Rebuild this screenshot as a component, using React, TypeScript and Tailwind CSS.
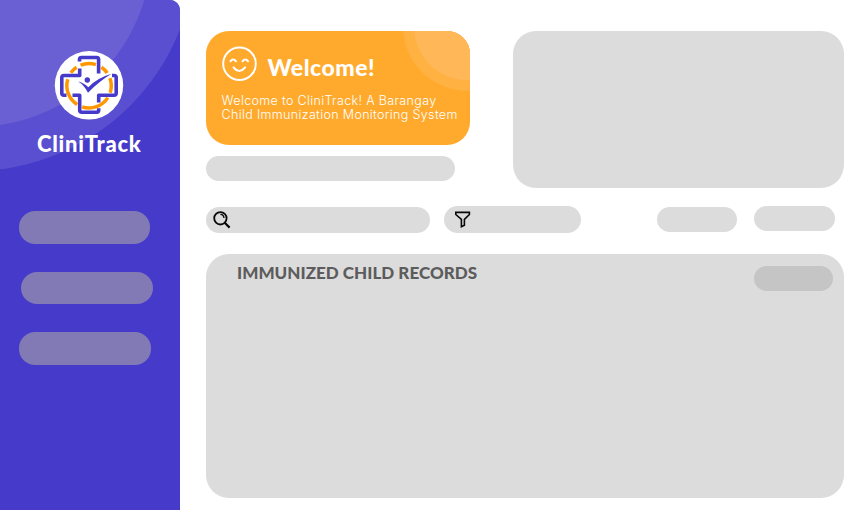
function ClinicLogo() {
  return (
    <svg className="block h-[70px] w-[70px]" viewBox="0 0 70 70" fill="none" aria-hidden="true">
      <circle cx="35" cy="35.3" r="34.2" fill="#fff" />
      <path
        d="M25.5 11.5V9.5Q25.5 7.5 27.5 7.5H42.6Q44.6 7.5 44.6 9.5V23.5M25.7 18.5V25.5H10Q7.8 25.5 7.8 27.5V43Q7.8 45.3 10 45.3H12.5M18.5 45.3H25.7V60Q25.7 62.2 27.7 62.2H42.7Q44.7 62.2 44.7 60V58.2M44.7 52.5V45.3H60Q62.2 45.3 62.2 43V27.5Q62.2 25.5 60 25.5H58"
        stroke="#463aca"
        strokeWidth="3.6"
        strokeLinejoin="round"
      />
      <g stroke="#ff9800" strokeWidth="3.5">
        <path d="M13.8 29.2A22.2 22.2 0 0 0 23.2 54.5" />
        <path d="M16.8 22.8A22.2 22.2 0 0 1 22.6 17.3" />
        <path d="M26.5 15.2A22.2 22.2 0 0 1 41.9 14.6" />
        <path d="M47.4 17.3A22.2 22.2 0 0 1 53.2 23" />
        <path d="M55.9 28.1A22.2 22.2 0 0 1 56.2 42.7" />
        <path d="M53.8 47.6A22.2 22.2 0 0 1 28.1 56.8" />
      </g>
      <path d="M24.5 31.5Q31 33.5 34.5 37.3Q43 28 57.5 23.8Q45 31.5 34 42.5Q30 35 24.5 31.5Z" fill="#fff" stroke="#fff" strokeWidth="2.4" />
      <path d="M24.2 31.5Q31 33.5 34.3 37.3Q43 28 57.5 23.8Q45 31.5 34 42.7Q30 35 24.2 31.5Z" fill="#463aca" />
      <circle cx="33.3" cy="30" r="2.7" fill="#463aca" />
    </svg>
  );
}

function SmileIcon() {
  return (
    <svg className="block h-[36px] w-[36px]" viewBox="0 0 36 36" fill="none" stroke="#fff" strokeWidth="2" strokeLinecap="round" aria-hidden="true">
      <circle cx="17.5" cy="17.8" r="16.3" />
      <path d="M8.4 15.3q2.8-3.7 5.6 0M20.5 15.3q2.8-3.7 5.6 0M11.5 21.4q5.8 7 11.6 0" />
    </svg>
  );
}

function SearchIcon() {
  return (
    <svg className="block h-[18px] w-[18px]" viewBox="0 0 18 18" fill="none" stroke="#080808" strokeWidth="1.8" aria-hidden="true">
      <circle cx="7.4" cy="7.3" r="6.2" />
      <path d="M11.5 11.5L16.6 16.6" strokeWidth="2.2" />
      <path d="M7.4 3.4Q10.6 3.5 11 7" strokeWidth="1.4" />
    </svg>
  );
}

function FilterIcon() {
  return (
    <svg className="block h-[17px] w-[16px]" viewBox="0 0 16 17" fill="none" stroke="#080808" strokeWidth="1.6" aria-hidden="true">
      <path d="M0.8 1.4H14.4V3.5L9.4 8.3V14.2L6.4 15.7V8.3L0.8 3.5Z" />
    </svg>
  );
}

function Sidebar() {
  return (
    <aside className="relative h-full w-[180px] shrink-0 overflow-hidden rounded-tr-[10px] bg-[#463aca]">
      <div className="absolute -top-[273px] -left-[249px] h-[444px] w-[444px] rounded-full bg-[#594fd0]" />
      <div className="absolute -top-[230px] -left-[205px] h-[357px] w-[357px] rounded-full bg-[#6a60d4]" />
      <div className="relative flex flex-col pt-[50px]">
        <div className="ml-[54px]">
          <ClinicLogo />
        </div>
        <h1 className="mt-[9px] ml-[37px] h-[30px] whitespace-nowrap font-[Lato,sans-serif] text-[22px] leading-[30px] font-black tracking-[0.75px] text-white">
          CliniTrack
        </h1>
        <nav className="mt-[52px] flex flex-col gap-[28px]">
          <div className="ml-[18.5px] h-[33px] w-[131.5px] rounded-[16px] bg-[#817ab4]" />
          <div className="ml-[21px] h-[32px] w-[131.5px] rounded-[16px] bg-[#817ab4]" />
          <div className="ml-[19px] h-[33px] w-[132px] rounded-[16px] bg-[#817ab4]" />
        </nav>
      </div>
    </aside>
  );
}

function WelcomeCard() {
  return (
    <section className="relative h-[114px] w-[264px] overflow-hidden rounded-[23px] bg-[#ffaa2d]">
      <div className="absolute -top-[69px] left-[197px] h-[129px] w-[129px] rounded-full bg-[#ffb142]" />
      <div className="absolute -top-[57px] left-[207.5px] h-[106px] w-[106px] rounded-full bg-[#ffb758]" />
      <div className="relative pt-[15px] pl-[15.5px]">
        <div className="flex h-[36px]">
          <SmileIcon />
          <h2 className="mt-[6px] ml-[10px] h-[30px] whitespace-nowrap font-[Lato,sans-serif] text-[23px] leading-[30px] font-black tracking-[0.5px] text-white">
            Welcome!
          </h2>
        </div>
        <div className="mt-[12px] flex flex-col whitespace-nowrap font-[Inter,sans-serif] text-[12.5px] leading-[14px] font-light tracking-[0.35px] text-white">
          <p>Welcome to CliniTrack! A Barangay</p>
          <p>Child Immunization Monitoring System</p>
        </div>
      </div>
    </section>
  );
}

export default function App() {
  return (
    <div className="flex h-[510px] w-[860px] overflow-hidden bg-white">
      <Sidebar />
      <main className="flex flex-1 flex-col pt-[31px] pl-[26px]">
        <div className="flex h-[157px] gap-[43px]">
          <div className="flex flex-col gap-[11px]">
            <WelcomeCard />
            <div className="h-[25px] w-[249px] rounded-[12.5px] bg-[#dcdcdc]" />
          </div>
          <div className="h-[157px] w-[331px] rounded-[23px] bg-[#dcdcdc]" />
        </div>
        <div className="mt-[18px] flex h-[27px] items-start">
          <div className="mt-px flex h-[26px] w-[224px] rounded-[13px] bg-[#dcdcdc] pt-[4px] pl-[7px]">
            <SearchIcon />
          </div>
          <div className="ml-[14px] flex h-[27px] w-[137px] rounded-[13.5px] bg-[#dcdcdc] pt-[5px] pl-[11px]">
            <FilterIcon />
          </div>
          <div className="mt-px ml-[76px] h-[25px] w-[80px] rounded-[12.5px] bg-[#dcdcdc]" />
          <div className="ml-[17px] h-[25px] w-[81px] rounded-[12.5px] bg-[#dcdcdc]" />
        </div>
        <section className="mt-[21px] flex h-[244px] w-[638px] items-start justify-between rounded-[23px] bg-[#dcdcdc] pt-[9px] pr-[11px] pl-[31px]">
          <h2 className="h-[20px] whitespace-nowrap font-[Lato,sans-serif] text-[17px] leading-[20px] font-black tracking-[0.03px] text-[#5c5c5c]">
            IMMUNIZED CHILD RECORDS
          </h2>
          <div className="mt-[3px] h-[25px] w-[79px] rounded-[12.5px] bg-[#c5c5c5]" />
        </section>
      </main>
    </div>
  );
}
